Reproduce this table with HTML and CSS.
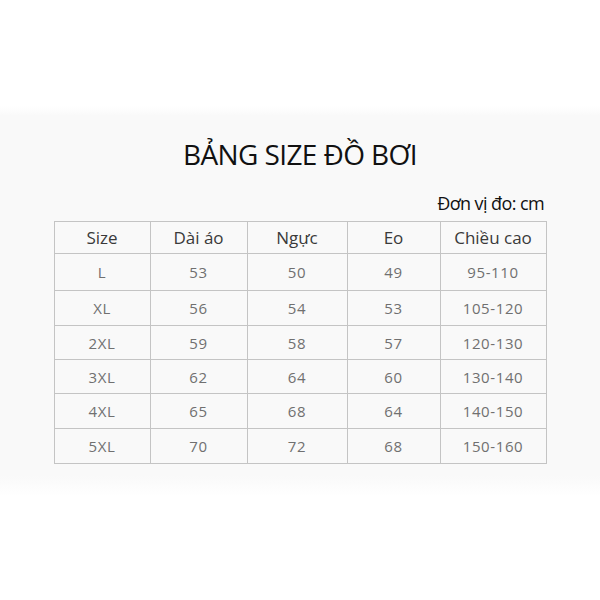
FILE: index.html
```html
<!DOCTYPE html>
<html lang="vi">
<head>
<meta charset="utf-8">
<link rel="stylesheet" href="styles.css">
</head>
<body>
<div class="page">
  <section class="band">
    <h1 class="title">BẢNG SIZE ĐỒ BƠI</h1>
    <div class="unit">Đơn vị đo: cm</div>
    <table class="sizes">
      <colgroup>
        <col class="c1"><col class="c2"><col class="c3"><col class="c4"><col class="c5">
      </colgroup>
      <thead>
        <tr><th>Size</th><th>Dài áo</th><th>Ngực</th><th>Eo</th><th>Chiều cao</th></tr>
      </thead>
      <tbody>
        <tr class="r1"><td>L</td><td>53</td><td>50</td><td>49</td><td>95-110</td></tr>
        <tr class="r2"><td>XL</td><td>56</td><td>54</td><td>53</td><td>105-120</td></tr>
        <tr class="r3"><td>2XL</td><td>59</td><td>58</td><td>57</td><td>120-130</td></tr>
        <tr class="r4"><td>3XL</td><td>62</td><td>64</td><td>60</td><td>130-140</td></tr>
        <tr class="r5"><td>4XL</td><td>65</td><td>68</td><td>64</td><td>140-150</td></tr>
        <tr class="r6"><td>5XL</td><td>70</td><td>72</td><td>68</td><td>150-160</td></tr>
      </tbody>
    </table>
  </section>
</div>
</body>
</html>
```

FILE: styles.css
```css
html, body {
  margin: 0;
  padding: 0;
  background: #ffffff;
}
.page {
  width: 600px;
  height: 600px;
  padding-top: 106px;
  box-sizing: border-box;
}
.band {
  height: 390px;
  box-sizing: border-box;
  padding: 30px 54px 0 54px;
  background: linear-gradient(to bottom, #ffffff 0px, #f9f9f9 10px, #f9f9f9 370px, #ffffff 390px);
  display: flex;
  flex-direction: column;
  align-items: center;
  font-family: "Open Sans", "Liberation Sans", sans-serif;
}
.title {
  margin: 0;
  font-weight: 400;
  font-size: 28px;
  line-height: 36px;
  color: #111;
  letter-spacing: -0.6px;
}
.unit {
  align-self: flex-end;
  margin-top: 20px;
  margin-right: 2px;
  font-size: 18px;
  line-height: 22px;
  color: #111;
  letter-spacing: -0.6px;
}
.sizes {
  margin-top: 7px;
  width: 492px;
  border-collapse: collapse;
  table-layout: fixed;
  border: 1px solid #b8b8b8;
}
.c1 { width: 96px; }
.c2 { width: 97px; }
.c3 { width: 100px; }
.c4 { width: 93px; }
.c5 { width: 106px; }
.sizes th, .sizes td {
  border: 1px solid #c4c4c4;
  padding: 0;
  text-align: center;
  vertical-align: middle;
}
.sizes th {
  height: 31px;
  font-weight: 400;
  font-size: 17px;
  color: #3a3a3a;
}
.sizes td {
  height: 34px;
  font-size: 15px;
  color: #707070;
  letter-spacing: 0.6px;
}
.sizes tr.r1 td { height: 36px; }
.sizes tr.r3 td, .sizes tr.r4 td { height: 33px; }
```
